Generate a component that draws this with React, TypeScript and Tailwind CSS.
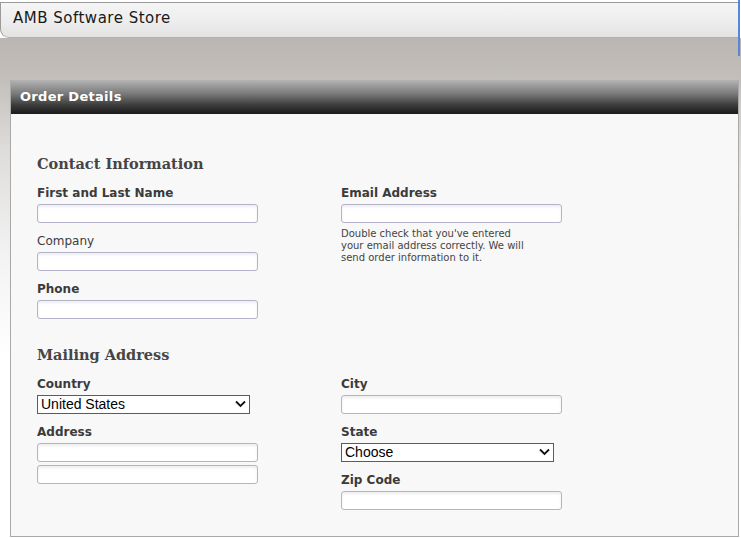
import React from "react";

const sans = { fontFamily: '"DejaVu Sans", Verdana, sans-serif' };

function TextInput({ className = "" }: { className?: string }) {
	return (
		<input
			type="text"
			className={`block w-[221px] h-[19px] bg-white border border-[#b3b3cb] rounded-[3px] shadow-[inset_0_2px_3px_rgba(0,0,0,0.07)] outline-none ${className}`}
		/>
	);
}

function Select({ value, width }: { value: string; width: string }) {
	return (
		<div className={`relative h-[19px] ${width}`}>
			<select
				defaultValue={value}
				className="appearance-none block w-full h-full bg-white border border-[#5c5c5c] pl-[3px] text-[14px] leading-[17px] text-black outline-none"
				style={{ fontFamily: '"Liberation Sans", Arial, sans-serif' }}
			>
				<option>{value}</option>
			</select>
			<svg
				className="absolute right-[4px] top-[5px] pointer-events-none"
				width="11"
				height="8"
				viewBox="0 0 11 8"
			>
				<polyline points="1,1.5 5.5,6 10,1.5" fill="none" stroke="#111" strokeWidth="1.8" />
			</svg>
		</div>
	);
}

function Label({ children, bold = true }: { children: React.ReactNode; bold?: boolean }) {
	return (
		<div
			className={`text-[12px] leading-[14px] text-[#3b3b3b] mb-[4px] ${bold ? "font-bold" : ""}`}
			style={sans}
		>
			{children}
		</div>
	);
}

function Heading({ children }: { children: React.ReactNode }) {
	return (
		<h2
			className="text-[14.5px] leading-[20px] font-bold text-[#454545]"
			style={{ fontFamily: '"DejaVu Serif", Georgia, serif' }}
		>
			{children}
		</h2>
	);
}

export default function App() {
	return (
		<div className="w-[741px] h-[538px] overflow-hidden bg-white relative">
			<div className="pt-[2px] bg-white">
				<div className="h-[36px] border-t border-b border-l border-[#9a9a9a] border-b-[#b0b0b0] rounded-bl-[9px] mr-[2px] bg-[linear-gradient(to_bottom,#f5f5f5,#ececec_60%,#e3e3e3)] flex items-center pl-[12px] pb-[3px]">
					<span className="text-[15px] text-[#1a1a1a] tracking-[0.5px]" style={sans}>
						AMB Software Store
					</span>
				</div>
			</div>

			<div className="h-[500px] bg-[linear-gradient(to_bottom,#bbb6b1_0px,#c2beba_40px,#dedcda_110px,#f3f3f3_220px,#ffffff_320px)] pt-[42px] pl-[10px] pr-[2px]">
				<div className="border-l border-r border-b border-[#a9a9a9] h-[457px]">
					<div className="h-[34px] bg-[linear-gradient(to_bottom,#b4b4b4,#7a7a7a_40%,#3a3a3a_75%,#1b1b1b)] flex items-center pl-[9px]">
						<span className="text-[13px] font-bold text-white tracking-[0.3px]" style={sans}>
							Order Details
						</span>
					</div>
					<div className="bg-[#f8f8f8] h-[422px] pl-[26px] pt-[40px]">
						<Heading>Contact Information</Heading>
						<div className="flex mt-[12px]">
							<div className="w-[304px]">
								<Label>First and Last Name</Label>
								<TextInput />
								<div className="mt-[11px]">
									<Label bold={false}>Company</Label>
									<TextInput />
								</div>
								<div className="mt-[11px]">
									<Label>Phone</Label>
									<TextInput />
								</div>
							</div>
							<div>
								<Label>Email Address</Label>
								<TextInput />
								<p
									className="text-[10px] leading-[12px] text-[#444] mt-[5px] w-[190px]"
									style={sans}
								>
									Double check that you've entered your email address correctly. We will
									send order information to it.
								</p>
							</div>
						</div>

						<div className="mt-[26px]">
							<Heading>Mailing Address</Heading>
						</div>
						<div className="flex mt-[12px]">
							<div className="w-[304px]">
								<Label>Country</Label>
								<Select value="United States" width="w-[213px]" />
								<div className="mt-[11px]">
									<Label>Address</Label>
									<TextInput />
									<TextInput className="mt-[3px]" />
								</div>
							</div>
							<div>
								<Label>City</Label>
								<TextInput />
								<div className="mt-[11px]">
									<Label>State</Label>
									<Select value="Choose" width="w-[213px]" />
								</div>
								<div className="mt-[11px]">
									<Label>Zip Code</Label>
									<TextInput />
								</div>
							</div>
						</div>
					</div>
				</div>
			</div>
			<div className="absolute right-[1px] top-0 h-[56px] w-[2px] bg-[#5b86d6]" />
		</div>
	);
}
